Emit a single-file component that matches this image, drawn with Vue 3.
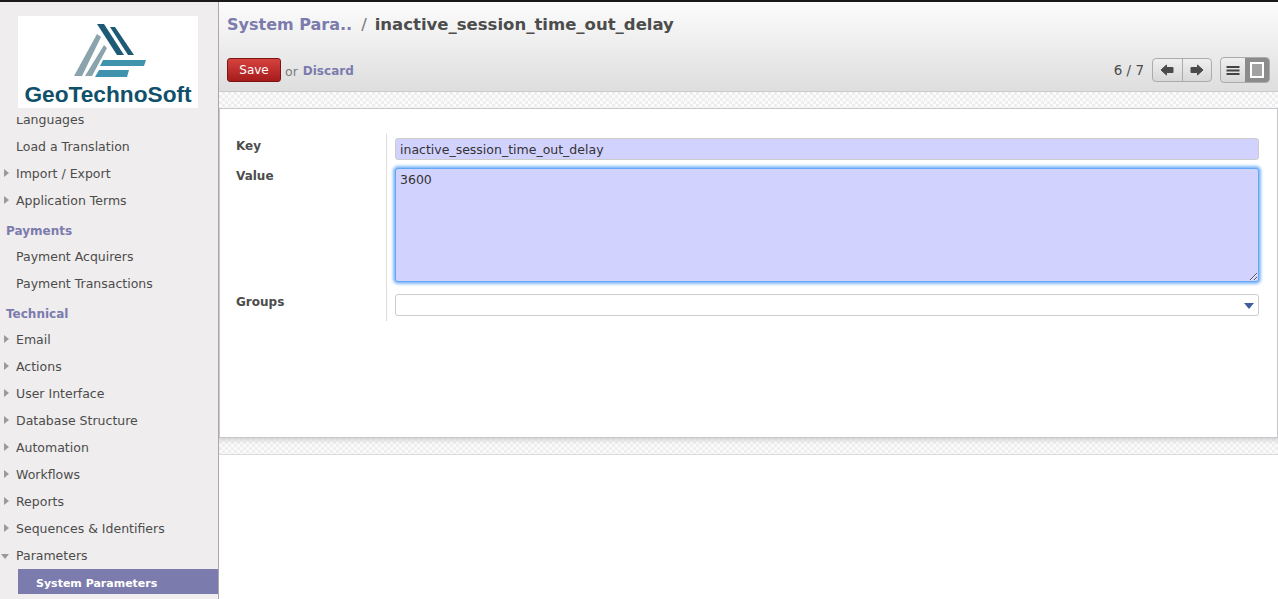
<script setup>
const groups = [
  { items: [
    { t: 'Languages' },
    { t: 'Load a Translation' },
    { t: 'Import / Export', arrow: 'r' },
    { t: 'Application Terms', arrow: 'r' },
  ] },
  { head: 'Payments', items: [
    { t: 'Payment Acquirers' },
    { t: 'Payment Transactions' },
  ] },
  { head: 'Technical', items: [
    { t: 'Email', arrow: 'r' },
    { t: 'Actions', arrow: 'r' },
    { t: 'User Interface', arrow: 'r' },
    { t: 'Database Structure', arrow: 'r' },
    { t: 'Automation', arrow: 'r' },
    { t: 'Workflows', arrow: 'r' },
    { t: 'Reports', arrow: 'r' },
    { t: 'Sequences & Identifiers', arrow: 'r' },
    { t: 'Parameters', arrow: 'd' },
  ] },
]
</script>

<template>
  <div class="app">
    <aside class="side">
      <div class="logo">
        <svg class="logo-mark" width="180" height="64" viewBox="0 0 180 64">
          <polygon points="79,8 86,8 106,39 99,39" fill="#1d5a75" />
          <polygon points="92,11 97,11 116,39 110,39" fill="#1d5a75" />
          <polygon points="79,18 83,21 64,60 56,60" fill="#8aa3ad" />
          <polygon points="86,29 89,32 74,60 67,60" fill="#8aa3ad" />
          <polygon points="85,44 128,44 126,50 82,50" fill="#3f93ad" />
          <polygon points="81,54 111,54 109,61 77,61" fill="#3f93ad" />
        </svg>
        <div class="logo-text">GeoTechnoSoft</div>
      </div>
      <nav class="menu">
        <template v-for="g in groups" :key="g.head || 'first'">
          <div v-if="g.head" class="head">{{ g.head }}</div>
          <div v-for="i in g.items" :key="i.t" class="row">
            <span v-if="i.arrow === 'r'" class="arr-r"></span>
            <span v-if="i.arrow === 'd'" class="arr-d"></span>
            {{ i.t }}
          </div>
        </template>
        <div class="row-active">System Parameters</div>
      </nav>
    </aside>

    <main class="main">
      <header class="top">
        <div class="crumbs">
          <span class="crumb-link">System Para..</span>
          <span class="crumb-sep">/</span>
          <span class="crumb-cur">inactive_session_time_out_delay</span>
        </div>
        <div class="bar">
          <div class="actions">
            <button class="save">Save</button>
            <span class="or">or</span>
            <span class="discard">Discard</span>
          </div>
          <div class="right">
            <span class="count">6 / 7</span>
            <div class="btn-group pager">
              <button class="pg">
                <svg width="14" height="12" viewBox="0 0 14 12"><path d="M1 6 L6.5 1 V3.5 H13 V8.5 H6.5 V11 Z" fill="#4a4a4a" stroke="#4a4a4a" stroke-width="1" stroke-linejoin="round" /></svg>
              </button>
              <button class="pg">
                <svg width="14" height="12" viewBox="0 0 14 12"><path d="M13 6 L7.5 1 V3.5 H1 V8.5 H7.5 V11 Z" fill="#4a4a4a" stroke="#4a4a4a" stroke-width="1" stroke-linejoin="round" /></svg>
              </button>
            </div>
            <div class="btn-group views">
              <button class="vw">
                <svg width="14" height="9" viewBox="0 0 14 9"><path d="M0.5 0H13.5V2H0.5ZM0.5 3.5H13.5V5.5H0.5ZM0.5 7H13.5V9H0.5Z" fill="#444" /></svg>
              </button>
              <button class="vw on">
                <svg width="14" height="16" viewBox="0 0 14 16"><rect x="1" y="1" width="12" height="14" fill="#a2a2a2" stroke="#fff" stroke-width="2" /></svg>
              </button>
            </div>
          </div>
        </div>
      </header>

      <div class="strip"></div>
      <section class="sheet">
        <div class="form">
          <label class="lbl">Key</label>
          <div class="cell"><input class="inp req" value="inactive_session_time_out_delay" /></div>
          <label class="lbl">Value</label>
          <div class="cell"><textarea class="area" autocomplete="off">3600</textarea></div>
          <label class="lbl lbl-groups">Groups</label>
          <div class="cell cell-last">
            <div class="sel"><span class="caret"></span></div>
          </div>
        </div>
      </section>
      <div class="strip strip-low"></div>
    </main>
  </div>
</template>

<style>
html, body { margin: 0; background: #fff; overflow: hidden; }
</style>

<style scoped>
.app {
  display: flex;
  width: 1278px;
  height: 599px;
  box-sizing: border-box;
  border-top: 2px solid #1a1a1a;
  font-family: "DejaVu Sans", "Liberation Sans", sans-serif;
  font-size: 12.5px;
  color: #4c4c4c;
  overflow: hidden;
}
.side {
  width: 219px;
  flex: none;
  box-sizing: border-box;
  background: #efeded;
  border-right: 1px solid #a9a9ab;
  display: flex;
  flex-direction: column;
  overflow: hidden;
}
.logo {
  margin: 14px 0 9px 18px;
  width: 180px;
  height: 92px;
  flex: none;
  background: #fff;
  display: flex;
  flex-direction: column;
  align-items: center;
}
.logo-mark { display: block; flex: none; }
.logo-text {
  font-family: "Liberation Sans", Arial, sans-serif;
  font-weight: 700;
  font-size: 22.7px;
  line-height: 28px;
  color: #10506b;
  white-space: nowrap;
}
.menu {
  flex: 1;
  min-height: 0;
  display: flex;
  flex-direction: column;
  justify-content: flex-end;
  overflow: hidden;
  padding-bottom: 5px;
}
.row {
  flex: none;
  height: 27px;
  line-height: 27px;
  padding-left: 16px;
  position: relative;
  white-space: nowrap;
}
.head {
  flex: none;
  height: 29px;
  line-height: 27px;
  padding: 4px 0 0 6px;
  box-sizing: border-box;
  font-weight: 700;
  font-size: 12px;
  color: #7c7bad;
}
.arr-r {
  position: absolute;
  left: 4px;
  top: 9px;
  border-left: 5px solid #9a9a9a;
  border-top: 4px solid transparent;
  border-bottom: 4px solid transparent;
}
.arr-d {
  position: absolute;
  left: 1px;
  top: 12px;
  border-top: 5px solid #9a9a9a;
  border-left: 4px solid transparent;
  border-right: 4px solid transparent;
}
.row-active {
  flex: none;
  height: 25px;
  line-height: 30px;
  margin-left: 18px;
  padding-left: 18px;
  background: #7c7bad;
  color: #fff;
  font-weight: 700;
  font-size: 11px;
}
.main {
  flex: 1;
  min-width: 0;
  display: flex;
  flex-direction: column;
}
.top {
  height: 90px;
  flex: none;
  box-sizing: border-box;
  background: linear-gradient(#fcfcfc, #dedede);
  border-bottom: 1px solid #cacaca;
  padding: 11px 8px 0 8px;
}
.crumbs {
  height: 24px;
  line-height: 24px;
  font-size: 16.5px;
  font-weight: 700;
  white-space: nowrap;
  display: flex;
  gap: 9px;
}
.crumb-link { color: #7c7bad; font-size: 16px; }
.crumb-sep { color: #777; font-weight: 400; }
.crumb-cur { color: #4c4c4c; margin-left: -1px; }
.bar {
  margin-top: 21px;
  display: flex;
  justify-content: space-between;
  align-items: center;
  height: 24px;
}
.actions { display: flex; align-items: center; gap: 4px; }
.save {
  width: 54px;
  height: 24px;
  padding: 0;
  border: 1px solid #7c1414;
  border-radius: 3px;
  background: linear-gradient(#d6423e, #a51c1c);
  color: #fff;
  font: 12px "DejaVu Sans", sans-serif;
}
.or { color: #7a7a7a; margin-top: 2px; }
.discard { color: #7c7bad; font-weight: 700; font-size: 12px; margin: 2px 0 0 1px; }
.right { display: flex; align-items: center; }
.count { color: #4c4c4c; margin-right: 8px; font-size: 13.5px; }
.btn-group {
  display: flex;
  box-sizing: border-box;
  border: 1px solid #ababab;
  border-radius: 4px;
  overflow: hidden;
  background: linear-gradient(#efefef, #d8d8d8);
}
.pager { height: 24px; width: 60px; margin-right: 8px; }
.views { height: 26px; width: 50px; }
.pg, .vw {
  flex: 1;
  padding: 0;
  border: 0;
  background: transparent;
  display: flex;
  align-items: center;
  justify-content: center;
}
.pg + .pg { border-left: 1px solid #ababab; }
.vw.on { background: #8b8b8b; }
.strip {
  height: 16px;
  flex: none;
  background-color: #fbfbfb;
  background-image: conic-gradient(#eeeeee 25%, transparent 0 50%, #eeeeee 0 75%, transparent 0);
  background-size: 6px 6px;
}
.strip-low {
  height: 17px;
  border-bottom: 1px solid #dcdcdc;
  box-sizing: border-box;
  box-shadow: inset 0 5px 5px -3px #cfcfcf;
}
.sheet {
  height: 330px;
  flex: none;
  box-sizing: border-box;
  background: #fff;
  border: 1px solid #c6c6cc;
  padding: 25px 18px 0 16px;
}
.form {
  display: grid;
  grid-template-columns: 150px 1fr;
}
.lbl {
  font-weight: 700;
  font-size: 12px;
  line-height: 24px;
  color: #4c4c4c;
}
.lbl-groups { padding-top: 4px; }
.cell {
  border-left: 1px solid #ddd;
  padding: 4px 0 4px 8px;
  display: flex;
}
.cell-last { padding: 8px 0 5px 8px; }
.inp {
  width: 100%;
  height: 22px;
  box-sizing: border-box;
  border: 1px solid #cccccc;
  border-radius: 3px;
  background: #d2d2ff;
  padding: 0 4px;
  font: 12.5px "DejaVu Sans", sans-serif;
  color: #333;
  outline: none;
}
.area {
  width: 100%;
  height: 114px;
  display: block;
  box-sizing: border-box;
  border: 1px solid #62a8f5;
  border-radius: 3px;
  background: #d2d2ff;
  padding: 3px 4px 4px;
  font: 12.5px "DejaVu Sans", sans-serif;
  color: #333;
  box-shadow: 0 0 3px 2px #7fb8f8;
  outline: none;
}
.sel {
  width: 100%;
  height: 22px;
  box-sizing: border-box;
  border: 1px solid #cccccc;
  border-radius: 3px;
  background: #fff;
  position: relative;
}
.caret {
  position: absolute;
  right: 4px;
  top: 8px;
  border-top: 6px solid #3e5f9c;
  border-left: 5px solid transparent;
  border-right: 5px solid transparent;
}
</style>
